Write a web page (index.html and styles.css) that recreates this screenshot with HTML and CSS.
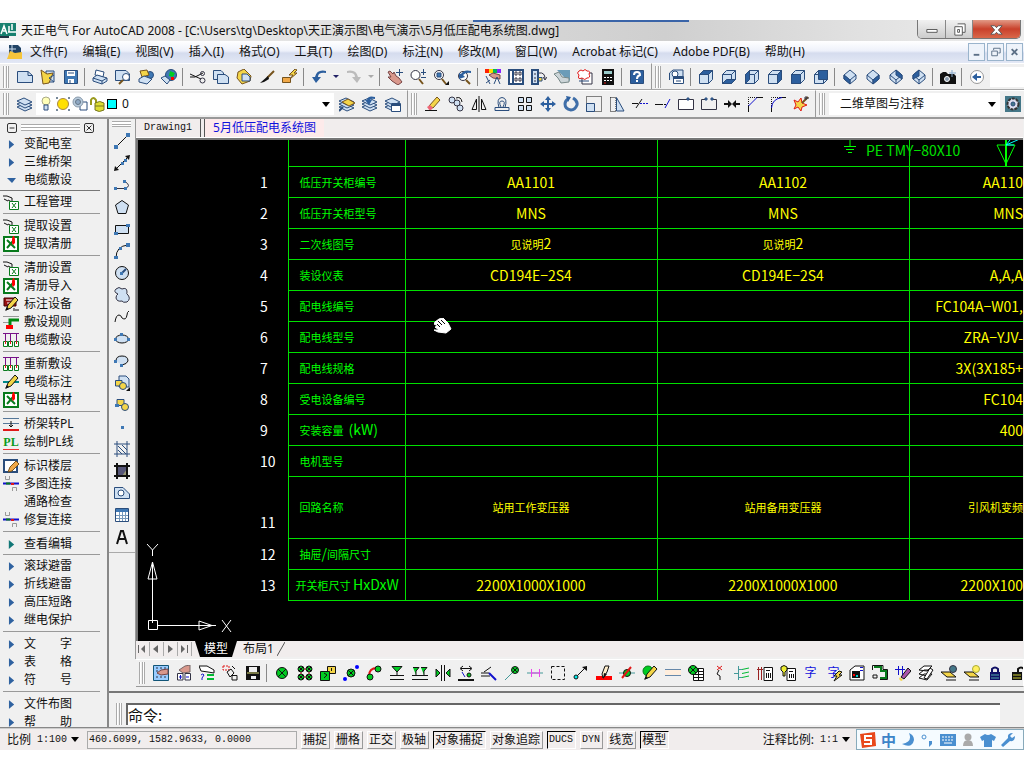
FILE: index.html
```html
<!DOCTYPE html>
<html lang="zh-CN">
<head>
<meta charset="utf-8">
<title>天正电气 For AutoCAD 2008</title>
<link rel="stylesheet" href="styles.css">
</head>
<body>
<svg class="defs" aria-hidden="true">
<symbol id="cube" viewBox="0 0 16 16"><path class="lb" d="M1.500 5.500L5.500 1.500H14.500V10.500L10.500 14.500H1.500Z"/><path d="M1.500 5.500H10.500V14.500M10.500 5.500L14.500 1.500"/></symbol>
<symbol id="dia" viewBox="0 0 16 16"><path class="lb" d="M8 1L14 6V10L8 15L2 10V6Z"/><path d="M2 6L8 11L14 6M8 11V15"/></symbol>
<symbol id="layers" viewBox="0 0 16 16"><path class="lb" d="M0 11L7 8L15 12L8 15Z"/><path class="lb" d="M0 8L7 5L15 9L8 12Z"/><path class="lb" d="M0 5L7 2L15 6L8 9Z"/></symbol>
<symbol id="hand" viewBox="0 0 16 16"><path class="sk w1" d="M0 2H4L9 4V8L5 6M1 5L5 7"/><path class="sgn wh" d="M6.500 7.500H15.500V15.500H6.500Z"/><path class="sgn" d="M9 9L13 14M13 9L9 14"/></symbol>
<symbol id="xls" viewBox="0 0 16 16"><path class="sgn2 wh" d="M1 1H15V15H1Z"/><path class="sgn2" d="M4 4L12 12M10 5L4 12"/><path class="rd n" d="M9 7V3L10 0H11L12 3V7L10 9Z"/></symbol>
<symbol id="racks" viewBox="0 0 16 16"><path class="sp" d="M0 1.500H16M2.500 1V9M7.500 1V9M13.500 1V9"/><path class="sgn wh" d="M.5 9.500H4.500V14.500H.5ZM5.500 9.500H9.500V14.500H5.500ZM11.500 9.500H15.500V14.500H11.500Z"/><path class="sr" d="M2.500 9V12M7.500 9V12M13.500 9V12"/></symbol>
<symbol id="join" viewBox="0 0 16 16"><path class="sgy" d="M2.500 0V3.500H6.500V0M9.500 15V11.500H13.500V15"/><path class="sb w2" d="M0 7.500H16"/><path class="sgn w2" d="M3 7.500H7"/><path class="sr w2" d="M8 8H11"/></symbol>
<symbol id="lamp" viewBox="0 0 16 16"><circle class="gn sk" cx="8" cy="8" r="5.500"/><path class="sk" d="M4 4L12 12M12 4L4 12"/></symbol>
<symbol id="pencil" viewBox="0 0 16 16"><path class="yl sk" d="M3 14L5 9L12 1L15 4L8 12Z"/><path class="bk n" d="M2 15L4 11L6 13Z"/></symbol>
<symbol id="tri" viewBox="0 0 6 10"><path class="tr" d="M0 0L6 5L0 10Z"/></symbol>
</svg>

<header class="titlebar">
  <svg class="appicon" viewBox="0 0 16 16"><path fill="#17806f" d="M0 0H16V13H0Z"/><path stroke="#fff" fill="none" stroke-width="1.500" d="M1 11L4 3L7 11M3 8H6M9 3V9M12 1V7M8 9H16"/><path fill="#234" d="M0 13H9V15H0Z"/></svg>
  <h1>天正电气 For AutoCAD 2008 - [C:\Users\tg\Desktop\天正演示图\电气演示\5月低压配电系统图.dwg]</h1>
  <span class="accent"></span>
  <div class="winbtns">
    <button class="wmin" aria-label="最小化"><svg viewBox="0 0 16 16"><path d="M3 8H14V11H3Z"/></svg></button><button class="wmax" aria-label="还原"><svg viewBox="0 0 16 16"><path d="M6 2H14V11H11M3 5H11V14H3ZM6 8H8V11H6Z"/></svg></button><button class="wclose" aria-label="关闭"><svg viewBox="0 0 16 16"><path d="M2 4H6L8 6L10 4H14L10 8.500L14 13H10L8 11L6 13H2L6 8.500Z"/></svg></button>
  </div>
</header>

<nav class="menubar">
  <svg class="docicon" viewBox="0 0 16 16"><path fill="#246" d="M2 1H11L14 4V12H2Z"/><path stroke="#cde" d="M5 1V8M2 5H9"/><path fill="#f6c53c" d="M0 15L3 7L8 9L15 8V15Z"/></svg>
  <button>文件(F)</button><button>编辑(E)</button><button>视图(V)</button><button>插入(I)</button><button>格式(O)</button><button>工具(T)</button><button>绘图(D)</button><button>标注(N)</button><button>修改(M)</button><button>窗口(W)</button><button>Acrobat 标记(C)</button><button>Adobe PDF(B)</button><button>帮助(H)</button>
  <div class="mdi">
    <button aria-label="最小化文档"><svg viewBox="0 0 16 16"><path d="M5 11H11" stroke-width="2"/></svg></button><button aria-label="还原文档"><svg viewBox="0 0 16 16"><path d="M6 6V4H13V9H11M4 7H10V12H4Z"/></svg></button><button aria-label="关闭文档"><svg viewBox="0 0 16 16"><path d="M5 5L11 11M11 5L5 11" stroke-width="2"/></svg></button>
  </div>
</nav>

<div class="bars">
<div class="bar">
  <div class="group">
    <span class="grip"></span>
    <button class="t" aria-label="新建"><svg viewBox="0 0 16 16"><path class="lb" d="M.5 2.500H11L15.500 6.500V13.500H.5Z"/><path d="M11 2.500V6.500H15.500"/></svg></button>
    <button class="t" aria-label="打开"><svg viewBox="0 0 16 16"><path class="lb" d="M6 2H14V13H6Z"/><path class="yl sbr" d="M1 1L7 5L13 4L9 14L3 15Z"/><path d="M14 6L9 9L14 13"/></svg></button>
    <button class="t" aria-label="保存"><svg viewBox="0 0 16 16"><path class="mb" d="M1.500 1.500H14.500V14.500H1.500Z"/><path class="wh n" d="M4 2H12V7H4ZM5 10H11V14H5Z"/><path d="M5 4H11M7 11V14"/></svg></button>
    <i class="sep"></i>
    <button class="t" aria-label="打印"><svg viewBox="0 0 16 16"><path class="wh" d="M4 1L12 3L11 8L3 6Z"/><path class="lb" d="M1 9L5 6L15 9V12L10 15L1 12Z"/><path d="M1 9L10 12L15 9M10 12V15"/></svg></button>
    <button class="t" aria-label="预览"><svg viewBox="0 0 16 16"><path class="lb" d="M.5 1.500H11L14.500 5V11.500H.5Z"/><circle class="wh" cx="11" cy="8" r="3.500"/><path class="sbr w2" d="M8 11L4 15"/></svg></button>
    <button class="t" aria-label="发布"><svg viewBox="0 0 16 16"><circle class="mb" cx="12" cy="6" r="3.500"/><path class="yl sbr" d="M2 2L9 1L11 6L4 8Z"/><path class="lb" d="M1 10L6 7L14 10L9 15L1 13Z"/></svg></button>
    <button class="t" aria-label="DWF"><svg viewBox="0 0 16 16"><circle class="mb" cx="10" cy="6" r="5.500"/><path class="gn n" d="M9 2L14 4L12 8L8 7Z"/><path class="lb" d="M0 9L4 7L9 11L6 15Z"/><path class="rd n" d="M10 8H13V11H10Z"/></svg></button>
    <i class="sep"></i>
    <button class="t" aria-label="剪切"><svg viewBox="0 0 16 16"><path class="sk" d="M0 5L11 10M0 8H5L13 4"/><circle class="sd" cx="12.500" cy="4.500" r="2"/><circle class="sd" cx="12.500" cy="11.500" r="2.500"/></svg></button>
    <button class="t" aria-label="复制"><svg viewBox="0 0 16 16"><path class="lb" d="M.5 1.500H8L10.500 4V10.500H.5Z"/><path class="lb" d="M4.500 5.500H12L15.500 8V14.500H4.500Z"/></svg></button>
    <button class="t" aria-label="粘贴"><svg viewBox="0 0 16 16"><path class="yl sbr" d="M2 3L8 0L15 7L14 12L6 15L1 9Z"/><path class="lb" d="M6 5H11L14 8V12H6Z"/></svg></button>
    <button class="t" aria-label="匹配特性"><svg viewBox="0 0 16 16"><path class="sbr w2" d="M15 2L8 9"/><path class="bk n" d="M9 7L10 10L5 13L1 14Z"/></svg></button>
    <button class="t" aria-label="块编辑"><svg viewBox="0 0 16 16"><path class="yl sbr" d="M13 0L7 6H11L8 10L15 4H12L15 1Z"/><path class="or sbr" d="M.5 8.500H8.500V13.500H.5Z"/></svg></button>
    <i class="sep"></i>
    <button class="t" aria-label="放弃"><svg viewBox="0 0 16 16"><path class="db n" d="M15 2Q6 0 4 8H1L5 14L10 8H7Q7 3 15 4Z"/></svg></button>
    <button class="drop" aria-label="放弃列表"><svg viewBox="0 0 6 4"><path d="M0 0H6L3 3Z"/></svg></button>
    <button class="t" aria-label="重做"><svg viewBox="0 0 16 16"><path fill="#bbb" class="n" d="M1 2Q10 0 12 8H15L11 14L6 8H9Q9 3 1 4Z"/></svg></button>
    <button class="drop dim" aria-label="重做列表"><svg viewBox="0 0 6 4"><path d="M0 0H6L3 3Z"/></svg></button>
    <i class="sep"></i>
    <button class="t" aria-label="平移"><svg viewBox="0 0 16 16"><path fill="#d9988c" stroke="#744" d="M1 3L3 2L6 5L7 3L9 7L12 9L15 13L11 16L5 12L1 8L4 8Z"/><path d="M12.500 0V7M9 3.500H16"/></svg></button>
    <button class="t" aria-label="实时缩放"><svg viewBox="0 0 16 16"><circle class="wh sd" cx="5.500" cy="6" r="4.500"/><path class="sbr w2" d="M9 10L13 15"/><path d="M13.500 0V6M11 3.500H16M11 8.500H16"/></svg></button>
    <button class="t" aria-label="窗口缩放"><svg viewBox="0 0 16 16"><circle class="wh sd" cx="6" cy="6" r="4.500"/><path class="mb" d="M4 4H8V8H4Z"/><path class="sbr w2" d="M9 10L13 15"/><path class="bk n" d="M16 12V16H12Z"/></svg></button>
    <button class="t" aria-label="上一个缩放"><svg viewBox="0 0 16 16"><circle class="wh sd" cx="7" cy="7" r="4.500"/><path class="sbr w2" d="M10 11L14 15"/><path class="db n" d="M15 2Q8 0 5 5L3 4V10L9 8L7 6Q10 3 15 4Z"/></svg></button>
    <i class="sep"></i>
    <button class="t" aria-label="特性"><svg viewBox="0 0 16 16"><path fill="#f20" class="n" d="M0 0H5V4H0Z"/><path fill="#fd0" class="n" d="M4 0H8V4H4Z"/><path fill="#0b5" class="n" d="M8 0H12V4H8Z"/><path fill="#82f" class="n" d="M12 0H16V4H12Z"/><path fill="#d9988c" stroke="#744" d="M4 6L8 4L15 6V10L8 9Z"/><path d="M1 7L5 15M1 14L5 11M9 15L12 8L15 15"/></svg></button>
    <button class="t" aria-label="设计中心"><svg viewBox="0 0 16 16"><path class="wh w2" d="M1 1H15V15H1Z"/><path class="w2" d="M5 1V15"/><path class="sd" d="M7 3V6H9V3ZM11 3V6H13V3ZM7 9V12H9V9ZM11 9V12H13V9Z"/></svg></button>
    <button class="t" aria-label="工具选项板"><svg viewBox="0 0 16 16"><path class="lb w2" d="M1 1H7V15H1Z"/><path class="sd" d="M3 5H5M3 9H5M3 12H5M8 4Q14 3 14 10M12 8L14 11L16 8"/><path class="yl" d="M7.500 8.500H11V12H7.500Z"/></svg></button>
    <button class="t" aria-label="图纸集"><svg viewBox="0 0 16 16"><path fill="#6b9cb8" class="n" d="M3 1H16V12L10 8Z"/><path fill="#ccd5d8" stroke="#788" d="M0 5L5 3L8 8L15 9V13L7 14L4 9Z"/></svg></button>
    <button class="t" aria-label="标记集"><svg viewBox="0 0 16 16"><path class="wh sd" d="M5 4H15V15H5Z"/><path class="sr wh" d="M2 2Q4 0 6 2Q8-1 10 2Q14 2 12 5Q14 9 10 9Q8 12 5 9Q0 11 2 6Q-1 4 2 2Z"/><path d="M2 12H12"/></svg></button>
    <button class="t" aria-label="计算器"><svg viewBox="0 0 16 16"><path class="bk n" d="M2 0H14V16H2Z"/><path fill="#9cc" class="n" d="M4 2H12V5H4Z"/><path stroke="#fff" stroke-dasharray="2 1" d="M4 8.500H12M4 11.500H12"/><path class="sr" d="M4 14H6"/></svg></button>
    <i class="sep"></i>
    <button class="t" aria-label="帮助"><svg viewBox="0 0 16 16"><path class="db" d="M1.500 1.500H14.500V14.500H1.500Z"/><path stroke="#fff" stroke-width="2" d="M5 6Q5 3 8 3Q11 3 11 6Q8 7 8 10M8 11V13"/></svg></button>
  </div>
  <div class="group last">
    <span class="grip"></span>
    <button class="t" aria-label="命名视图"><svg viewBox="0 0 16 16"><path class="lb" d="M.5 11V4L4 1H14V8"/><circle class="wh" cx="6" cy="5" r="3"/><path class="wh" d="M4.500 7.500H14.500V14.500H4.500Z"/><path class="w2" d="M5 9H14"/><path d="M7 12H12"/></svg></button>
    <i class="sep"></i>
    <button class="t" aria-label="俯视"><svg viewBox="0 0 16 16"><use href="#cube"/><path class="db" d="M1.500 5.500L5.500 1.500H14.500L10.500 5.500Z"/></svg></button>
    <button class="t" aria-label="仰视"><svg viewBox="0 0 16 16"><use href="#cube"/><path class="db" d="M1.500 14.500L5.500 10.500H14.500L10.500 14.500Z"/></svg></button>
    <button class="t" aria-label="左视"><svg viewBox="0 0 16 16"><use href="#cube"/><path class="db" d="M1.500 5.500L5.500 1.500V10.500L1.500 14.500Z"/></svg></button>
    <button class="t" aria-label="右视"><svg viewBox="0 0 16 16"><use href="#cube"/><path class="db" d="M10.500 5.500L14.500 1.500V10.500L10.500 14.500Z"/></svg></button>
    <button class="t" aria-label="主视"><svg viewBox="0 0 16 16"><use href="#cube"/><path class="db" d="M1.500 5.500H10.500V14.500H1.500Z"/></svg></button>
    <button class="t" aria-label="后视"><svg viewBox="0 0 16 16"><use href="#cube"/><path class="db" d="M5.500 1.500H14.500V10.500H5.500Z"/></svg></button>
    <i class="sep"></i>
    <button class="t" aria-label="西南"><svg viewBox="0 0 16 16"><use href="#dia"/><path class="db" d="M2 6L8 11V15L2 10Z"/></svg></button>
    <button class="t" aria-label="东南"><svg viewBox="0 0 16 16"><use href="#dia"/><path class="db" d="M14 6L8 11V15L14 10Z"/></svg></button>
    <button class="t" aria-label="东北"><svg viewBox="0 0 16 16"><use href="#dia"/><path class="db" d="M8 1L14 6V10L8 6Z"/></svg></button>
    <button class="t" aria-label="西北"><svg viewBox="0 0 16 16"><use href="#dia"/><path class="db" d="M8 1L2 6V10L8 7Z"/></svg></button>
    <i class="sep"></i>
    <button class="t" aria-label="相机"><svg viewBox="0 0 16 16"><path class="bk n" d="M0 5L3 3H6L8 5H14L16 7V15H0Z"/><circle fill="#89a" stroke="#fff" cx="7" cy="10" r="2.500"/><path stroke="#8ac" d="M12 1V8M9 4H16"/></svg></button>
    <i class="sep"></i>
    <button class="t" aria-label="返回"><svg viewBox="0 0 16 16"><circle class="wh sgy" cx="8" cy="8" r="6.500"/><path class="db n" d="M3 8L8 4V7H12V9H8V12Z"/></svg></button>
    <input class="search" aria-label="搜索">
  </div>
</div>

<div class="bar">
  <div class="group">
    <span class="grip"></span>
    <button class="t" aria-label="图层特性"><svg viewBox="0 0 16 16"><use href="#layers"/></svg></button>
    <div class="combo layer">
      <svg viewBox="0 0 16 16"><circle fill="#ffffb8" stroke="#aa8" cx="8" cy="5" r="4"/><path class="lb" d="M6 9H10V14H6Z"/></svg>
      <svg viewBox="0 0 16 16"><circle fill="#ffe000" stroke="#a84" cx="8" cy="8" r="5.500"/><path fill="#789" class="n" d="M1 1H3V3H1ZM13 1H15V3H13ZM1 13H3V15H1ZM13 13H15V15H13Z"/></svg>
      <svg viewBox="0 0 16 16"><path class="wh" d="M8 6H15V14H8Z"/><circle fill="#b8cbdc" stroke="#89a" cx="6" cy="6" r="5"/><circle fill="#8fa9c4" stroke="#678" cx="6" cy="6" r="2.500"/></svg>
      <svg viewBox="0 0 16 16"><path class="w2 sol" d="M2 9V4Q4 0 7 4V8"/><path fill="#dd3" stroke="#772" d="M6 7Q11 4 15 7V14Q10 17 6 14Z"/><path stroke="#772" d="M6 10H15"/></svg>
      <span class="swatch"></span>
      <select class="sel" aria-label="图层"><option>0</option></select>
      <svg class="arr" viewBox="0 0 8 5"><path d="M0 0H8L4 5Z"/></svg>
    </div>
    <button class="t" aria-label="置为当前"><svg viewBox="0 0 16 16"><use href="#layers"/><path class="yl sbr" d="M3 6L9 3L16 7L10 10Z"/><path class="w2" d="M0 15L4 11"/></svg></button>
    <button class="t" aria-label="上一图层"><svg viewBox="0 0 16 16"><use href="#layers"/><path class="db n" d="M13 1Q6-1 5 4H3L7 9L10 4H8Q9 2 13 3Z"/></svg></button>
    <button class="t" aria-label="图层状态"><svg viewBox="0 0 16 16"><use href="#layers"/><path class="wh" d="M6.500 7.500H15.500V15.500H6.500Z"/><path class="w2" d="M7 9H15"/></svg></button>
  </div>
  <div class="group">
    <span class="grip"></span>
    <button class="t" aria-label="删除"><svg viewBox="0 0 16 16"><path class="yl sbr" d="M4 10L12 1L15 4L8 12Z"/><path fill="#e67" class="n" d="M2 11L5 9L8 12L5 15Z"/><path class="sk" d="M0 14.500H12"/></svg></button>
    <button class="t" aria-label="复制对象"><svg viewBox="0 0 16 16"><circle class="lb sd" cx="4" cy="4" r="3"/><circle class="lb sd" cx="9" cy="7" r="3"/><circle class="lb sd" cx="12" cy="12" r="3"/><path class="sk" d="M8 2Q13 0 14 6"/></svg></button>
    <button class="t" aria-label="镜像"><svg viewBox="0 0 16 16"><path class="sk" d="M5.500 3V13.500H1ZM10.500 3V13.500H15ZM8 0V16"/></svg></button>
    <button class="t" aria-label="偏移"><svg viewBox="0 0 16 16"><path d="M1 14.500H15V11.500H11Q14 2 8 1.500Q2 2 5 11.500H1Z"/><path d="M5 11.500H11M7 11Q4 5 8 5Q12 5 9 11"/></svg></button>
    <button class="t" aria-label="阵列"><svg viewBox="0 0 16 16"><path class="lb sk" d="M1.500 1.500H6.500V6.500H1.500ZM9.500 1.500H14.500V6.500H9.500ZM1.500 9.500H6.500V14.500H1.500ZM9.500 9.500H14.500V14.500H9.500Z"/></svg></button>
    <button class="t" aria-label="移动"><svg viewBox="0 0 16 16"><path class="db n" d="M8 0L11 4H9V7H12V5L16 8L12 11V9H9V12H11L8 16L5 12H7V9H4V11L0 8L4 5V7H7V4H5Z"/></svg></button>
    <button class="t" aria-label="旋转"><svg viewBox="0 0 16 16"><path stroke="#3f6ea8" stroke-width="3" d="M10 2Q15 5 14 9Q12 14 8 14Q2 13 2 8Q2 5 5 3"/><path class="db n" d="M3 0L8 1L5 6Z"/></svg></button>
    <button class="t" aria-label="缩放"><svg viewBox="0 0 16 16"><path stroke-dasharray="1 1" class="sk" d="M.5 15.500V.5H15.500V15.500Z"/><path class="lb" d="M.5 7.500H8.500V15.500H.5Z"/></svg></button>
    <button class="t" aria-label="拉伸"><svg viewBox="0 0 16 16"><path stroke-dasharray="1 1" class="sk" d="M1.500 1.500V15.500H7V1.500Z"/><path class="lb" d="M7.500 1.500L15 15H7.500Z"/></svg></button>
    <button class="t" aria-label="修剪"><svg viewBox="0 0 16 16"><path class="sk" d="M0 7.500H6M4 12L10 3"/><path class="sb" stroke-dasharray="2 1" d="M8 7.500H16"/></svg></button>
    <button class="t" aria-label="延伸"><svg viewBox="0 0 16 16"><path class="sk" d="M0 8.500H6"/><path stroke-dasharray="2 1" class="sk" d="M6 8.500H11"/><path class="sb" d="M10 12L15 3"/></svg></button>
    <button class="t" aria-label="打断于点"><svg viewBox="0 0 16 16"><path class="wh sd" d="M.5 3.500H15.500V13.500H.5Z"/><path class="mb" d="M9 2H11V4H9Z"/></svg></button>
    <button class="t" aria-label="打断"><svg viewBox="0 0 16 16"><path class="sd" d="M5 3.500H.5V13.500H15.500V3.500H11"/><path class="mb" d="M4 2H6V4H4ZM10 2H12V4H10Z"/></svg></button>
    <button class="t" aria-label="合并"><svg viewBox="0 0 16 16"><path class="sk w2" d="M0 8H5M11 8H16"/><path class="bk n" d="M4 4L8 8L4 12ZM12 4L8 8L12 12Z"/></svg></button>
    <button class="t" aria-label="倒角"><svg viewBox="0 0 16 16"><path class="sk" stroke-dasharray="1 1" d="M1.500 10V1.500H10"/><path class="sk" d="M1.500 10V16M10 1.500H16"/><path class="sb" d="M1.500 10L10 1.500"/></svg></button>
    <button class="t" aria-label="圆角"><svg viewBox="0 0 16 16"><path class="sk" stroke-dasharray="1 1" d="M1.500 10V1.500H10"/><path class="sk" d="M1.500 10V16M10 1.500H16"/><path class="sb" d="M1.500 12Q2 3 12 1.500"/></svg></button>
    <button class="t" aria-label="分解"><svg viewBox="0 0 16 16"><path class="yl sr" d="M1 4L5 6L8 2L9 7L14 9L9 11L8 15L5 11L1 13L3 9Z"/><path class="sbr w2" d="M9 7L15 1"/><path class="sd" d="M13 0V4M11 2H16"/></svg></button>
  </div>
  <div class="group last">
    <span class="grip"></span>
    <div class="combo space"><select class="sel" aria-label="工作空间"><option>二维草图与注释</option></select><svg class="arr" viewBox="0 0 8 5"><path d="M0 0H8L4 5Z"/></svg></div>
    <button class="t" aria-label="工作空间设置"><svg viewBox="0 0 16 16"><path fill="#478" class="n" d="M0 0H16V16H0Z"/><circle fill="#dde" stroke="#333" stroke-dasharray="3 1" stroke-width="2" cx="8" cy="8" r="5.500"/><circle fill="#478" cx="8" cy="8" r="2"/></svg></button>
  </div>
</div>
</div>

<main class="work">
  <aside class="panel">
    <div class="phead"><button aria-label="折叠"><svg viewBox="0 0 10 10"><path d="M2 5H8"/></svg></button><span></span><button aria-label="关闭面板"><svg viewBox="0 0 10 10"><path d="M2 2L8 8M8 2L2 8"/></svg></button></div>
    <button class="p"><svg class="a" viewBox="0 0 6 10"><use href="#tri"/></svg>变配电室</button>
    <button class="p"><svg class="a" viewBox="0 0 6 10"><use href="#tri"/></svg>三维桥架</button>
    <button class="p"><svg class="a down" viewBox="0 0 9 5"><path class="tr" d="M0 0H9L5 5Z"/></svg>电缆敷设</button>
    <hr class="tight wide">
    <button class="p"><svg viewBox="0 0 16 16"><use href="#hand"/></svg>工程管理</button>
    <hr>
    <button class="p"><svg viewBox="0 0 16 16"><use href="#hand"/></svg>提取设置</button>
    <button class="p"><svg viewBox="0 0 16 16"><use href="#xls"/></svg>提取清册</button>
    <hr>
    <button class="p"><svg viewBox="0 0 16 16"><use href="#hand"/></svg>清册设置</button>
    <button class="p"><svg viewBox="0 0 16 16"><use href="#xls"/></svg>清册导入</button>
    <button class="p"><svg viewBox="0 0 16 16"><path fill="#911" stroke="#400" d="M1 2H13V10H1Z"/><path stroke="#fff" d="M3 4H10M4 7H7"/><use href="#pencil"/><path class="sk" d="M11 12V15M13 13V15M15 13V15"/></svg>标注设备</button>
    <button class="p"><svg viewBox="0 0 16 16"><path class="sgy" d="M0 2.500H16M0 8.500H6"/><path stroke="#081" stroke-width="3" d="M16 6H7V12"/><path class="rd n" d="M3 11H10V15H3Z"/></svg>敷设规则</button>
    <button class="p"><svg viewBox="0 0 16 16"><use href="#racks"/></svg>电缆敷设</button>
    <hr>
    <button class="p"><svg viewBox="0 0 16 16"><use href="#racks"/></svg>重新敷设</button>
    <button class="p"><svg viewBox="0 0 16 16"><path stroke="#088" stroke-width="2" d="M0 8H16"/><use href="#pencil"/></svg>电缆标注</button>
    <button class="p"><svg viewBox="0 0 16 16"><use href="#xls"/></svg>导出器材</button>
    <hr>
    <button class="p"><svg viewBox="0 0 16 16"><path stroke="#579" d="M0 2.500H16M0 7.500H16"/><path class="sk" d="M8 5V11M6 9L8 11L10 9"/><path class="sr w2" d="M0 14H16"/></svg>桥架转PL</button>
    <button class="p"><span class="pl">PL</span>绘制PL线</button>
    <hr>
    <button class="p"><svg viewBox="0 0 16 16"><path class="wh w2" d="M1 2H14V14H1Z"/><path class="or sbr" d="M5 14L7 9L13 3L16 6L9 13Z"/></svg>标识楼层</button>
    <button class="p"><svg viewBox="0 0 16 16"><use href="#join"/></svg>多图连接</button>
    <button class="p"><svg viewBox="0 0 16 16"></svg>通路检查</button>
    <button class="p"><svg viewBox="0 0 16 16"><use href="#join"/></svg>修复连接</button>
    <hr>
    <button class="p"><svg class="a" viewBox="0 0 6 10"><path fill="#177" stroke="none" d="M0 0L6 5L0 10Z"/></svg>查看编辑</button>
    <hr class="tight">
    <button class="p"><svg class="a" viewBox="0 0 6 10"><use href="#tri"/></svg>滚球避雷</button>
    <button class="p"><svg class="a" viewBox="0 0 6 10"><use href="#tri"/></svg>折线避雷</button>
    <button class="p"><svg class="a" viewBox="0 0 6 10"><use href="#tri"/></svg>高压短路</button>
    <button class="p"><svg class="a" viewBox="0 0 6 10"><use href="#tri"/></svg>继电保护</button>
    <hr>
    <button class="p"><svg class="a" viewBox="0 0 6 10"><use href="#tri"/></svg>文　　字</button>
    <button class="p"><svg class="a" viewBox="0 0 6 10"><use href="#tri"/></svg>表　　格</button>
    <button class="p"><svg class="a" viewBox="0 0 6 10"><use href="#tri"/></svg>符　　号</button>
    <hr>
    <button class="p"><svg class="a" viewBox="0 0 6 10"><use href="#tri"/></svg>文件布图</button>
    <div class="cut"><button class="p"><svg class="a" viewBox="0 0 6 10"><use href="#tri"/></svg>帮　　助</button></div>
  </aside>

  <div class="right">
    <div class="upper">
      <div class="drawcol"><div class="drawbar">
        <span class="hgrip"></span>
        <button class="t" aria-label="直线"><svg viewBox="0 0 16 16"><path class="sk" d="M2 14L14 2"/><path class="mb n" d="M0 12H4V16H0ZM12 0H16V4H12Z"/></svg></button>
        <button class="t" aria-label="构造线"><svg viewBox="0 0 16 16"><path class="sk" d="M1 15L15 1"/><path class="bk n" d="M0 16L1 11L5 15ZM16 0L11 1L15 5Z"/><path class="mb n" d="M7 7H10V10H7ZM10 4H13V7H10Z"/></svg></button>
        <button class="t" aria-label="多段线"><svg viewBox="0 0 16 16"><path class="sd" d="M1 11.500H11Q18 9 11 4.500"/><path class="mb n" d="M0 10H3V13H0ZM10 10H13V13H10ZM9 3H12V6H9Z"/></svg></button>
        <button class="t" aria-label="正多边形"><svg viewBox="0 0 16 16"><path class="lb sk" d="M8 1.500L14.500 6L12 14.500H4L1.500 6Z"/></svg></button>
        <button class="t" aria-label="矩形"><svg viewBox="0 0 16 16"><path class="lb sk" d="M1.500 4.500H14.500V12.500H1.500Z"/><path class="mb n" d="M0 11H4V14H0ZM12 3H16V6H12Z"/></svg></button>
        <button class="t" aria-label="圆弧"><svg viewBox="0 0 16 16"><path class="sk" d="M2 15Q2 3 14 2"/><path class="mb n" d="M0 13H4V16H0ZM12 0H16V4H12ZM5 4H8V7H5Z"/></svg></button>
        <button class="t" aria-label="圆"><svg viewBox="0 0 16 16"><circle class="lb sk" cx="8" cy="8" r="6.500"/><path class="w2" d="M8 8L12 4"/><path class="mb n" d="M6 7H9V10H6Z"/></svg></button>
        <button class="t" aria-label="修订云线"><svg viewBox="0 0 16 16"><path class="lb sd" d="M4 7Q-1 5 2 2Q5-1 8 2Q13 0 13 5Q12 7 14 8Q17 12 13 15Q9 16 8 14Q3 15 2 11Q2 8 4 7Z"/></svg></button>
        <button class="t" aria-label="样条曲线"><svg viewBox="0 0 16 16"><path class="sk" d="M1 13Q2 6 5 6Q7 6 8 9Q12 12 13 6Q13 3 15 2"/></svg></button>
        <button class="t" aria-label="椭圆"><svg viewBox="0 0 16 16"><ellipse class="lb sk" cx="8" cy="8" rx="6.500" ry="4"/><path class="mb n" d="M6 2H9V5H6ZM0 7H3V10H0ZM13 7H16V10H13Z"/></svg></button>
        <button class="t" aria-label="椭圆弧"><svg viewBox="0 0 16 16"><path class="lb sk" d="M2 8Q2 3 8 3Q14 3 14 8Q13 11 8 12"/><path class="mb n" d="M0 7H3V10H0ZM6 11H9V14H6Z"/></svg></button>
        <button class="t" aria-label="插入块"><svg viewBox="0 0 16 16"><path class="lb" d="M5 1H12L15 4V12H5Z"/><path class="yl" d="M1.500 5.500H8V11H1.500Z"/><circle class="yl" cx="9" cy="11" r="3.500"/><path class="bk n" d="M16 12V16H12Z"/></svg></button>
        <button class="t" aria-label="创建块"><svg viewBox="0 0 16 16"><path class="yl" d="M3 2.500H10V8.500H3Z"/><circle class="yl" cx="11" cy="10" r="3.500"/><path class="mb n" d="M1 7H5V10H1Z"/></svg></button>
        <button class="t" aria-label="点"><svg viewBox="0 0 16 16"><path class="mb n" d="M7 7H10V10H7Z"/></svg></button>
        <button class="t" aria-label="图案填充"><svg viewBox="0 0 16 16"><path d="M4 5L12 13M4 9L8 13M8 4L13 9"/><path d="M3 0V16M13 0V16M0 3H16M0 13H16"/></svg></button>
        <button class="t" aria-label="渐变色"><svg viewBox="0 0 16 16"><path fill="#557" class="n" d="M3 3H13V13H3Z"/><path fill="#997" class="n" d="M8 13L13 6V13Z"/><path class="sk w2" d="M3 0V16M13 0V16M0 3H16M0 13H16"/></svg></button>
        <button class="t" aria-label="面域"><svg viewBox="0 0 16 16"><path class="lb" d="M.5 2.500H9L15.500 9V13.500H.5Z"/><circle class="wh" cx="7" cy="8" r="3"/></svg></button>
        <button class="t" aria-label="表格工具"><svg viewBox="0 0 16 16"><path class="wh" d="M1.500 1.500H14.500V14.500H1.500Z"/><path class="mb n" d="M2 2H14V5H2Z"/><path stroke="#79b" d="M5.500 5V14M8.500 5V14M11.500 5V14M2 8.500H14M2 11.500H14"/></svg></button>
        <button class="t" aria-label="多行文字"><svg viewBox="0 0 16 16"><path class="sk w2" d="M3 15L7 2H9L13 15M5 10H11"/></svg></button>
      </div></div>
      <div class="doc">
        <div class="tabs"><button class="mono">Drawing1</button><button class="on">5月低压配电系统图</button></div>
        <div class="canvas">
          <table>
            <colgroup><col class="cn"><col class="cl"><col class="cd"><col class="cd"><col></colgroup>
            <tr class="top"><th></th><th></th><td></td><td></td><td></td></tr>
            <tr><th>1</th><th>低压开关柜编号</th><td>AA1101</td><td>AA1102</td><td>AA110</td></tr>
            <tr><th>2</th><th>低压开关柜型号</th><td>MNS</td><td>MNS</td><td>MNS</td></tr>
            <tr><th>3</th><th>二次线图号</th><td class="z">见说明<b>2</b></td><td class="z">见说明<b>2</b></td><td></td></tr>
            <tr><th>4</th><th>装设仪表</th><td>CD194E−2S4</td><td>CD194E−2S4</td><td>A,A,A</td></tr>
            <tr><th>5</th><th>配电线编号</th><td></td><td></td><td>FC104A−W01,</td></tr>
            <tr><th>6</th><th>配电线型号</th><td></td><td></td><td>ZRA−YJV-</td></tr>
            <tr><th>7</th><th>配电线规格</th><td></td><td></td><td>3X(3X185+</td></tr>
            <tr><th>8</th><th>受电设备编号</th><td></td><td></td><td>FC104</td></tr>
            <tr><th>9</th><th>安装容量&nbsp; <b>(kW)</b></th><td></td><td></td><td>400</td></tr>
            <tr><th>10</th><th>电机型号</th><td></td><td></td><td></td></tr>
            <tr class="tall"><th>11</th><th>回路名称</th><td class="z">站用工作变压器</td><td class="z">站用备用变压器</td><td class="z">引风机变频</td></tr>
            <tr><th>12</th><th>抽屉<b>/</b>间隔尺寸</th><td></td><td></td><td></td></tr>
            <tr><th>13</th><th class="w">开关柜尺寸 <b>HxDxW</b></th><td>2200X1000X1000</td><td>2200X1000X1000</td><td>2200X100</td></tr>
          </table>
          <div class="pe"><svg viewBox="0 0 12 14"><path d="M6 0V6M0 6.500H12M2 9.500H10M4 12.500H8"/></svg>PE TMY−80X10</div>
          <svg class="tap" viewBox="0 0 26 28"><path d="M1 7H19L10 26Z"/><path stroke-width="2" d="M10 0V28"/><path stroke="#0ff" d="M10 7L26 0M14 2L10 7L18 7"/></svg>
          <svg class="ucs" viewBox="0 0 90 92"><path d="M6.500 82V22M12 84.500H70M2.500 79.500H11.500V88.500H2.500ZM2 38H11L6.500 21ZM53 80V89L66 84.500ZM1 3L6.500 9L12 3M6.500 9V15M76 79L85 91M85 79L76 91"/></svg>
          <svg class="cursor" viewBox="0 0 18 16"><path d="M1 4L5 1L9 0L14 5L17 11L12 15L4 14L0 12L5 12L1 9L4 8L0 6Z"/><path stroke="#000" fill="none" d="M4 3L8 7M7 2L11 6M3 6L6 9"/></svg>
        </div>
        <div class="modeltabs"><button class="nb" aria-label="首个"><svg viewBox="0 0 10 10"><path d="M1 1H2V9H1ZM8 1L4 5L8 9Z"/></svg></button><button class="nb" aria-label="上一个"><svg viewBox="0 0 10 10"><path d="M7 1L2 5L7 9Z"/></svg></button><button class="nb" aria-label="下一个"><svg viewBox="0 0 10 10"><path d="M3 1L8 5L3 9Z"/></svg></button><button class="nb" aria-label="末个"><svg viewBox="0 0 10 10"><path d="M2 1L6 5L2 9ZM8 1H9V9H8Z"/></svg></button><button class="mt on">模型</button><button class="mt">布局1</button><svg class="slash" viewBox="0 0 8 14"><path d="M0 14L8 0"/></svg></div>
      </div>
    </div>

    <div class="elec">
      <span class="grip"></span>
      <button class="t" aria-label="设置"><svg viewBox="0 0 16 16"><path fill="#9cf" stroke="#157" d="M.5 .5H15.500V15.500H.5Z"/><path class="sd" stroke-dasharray="2 2" d="M3 3H13M3 6H13M3 12H13"/><path fill="#d9988c" stroke="#744" d="M4 8L8 5L15 4V9L8 10Z"/></svg></button>
      <button class="t" aria-label="导线"><svg viewBox="0 0 16 16"><path fill="#d9988c" stroke="#766" d="M3 5L9 1L14 0V7L7 8Z"/><path class="wh sd" d="M1.500 8.500H7V15H1.500ZM9 8.500H14.500V15H9Z"/><path class="sb" d="M3 12H6M4.500 10V14M10 12H13"/></svg></button>
      <button class="t" aria-label="布置"><svg viewBox="0 0 16 16"><path class="sk wh" d="M0 1L8 1L15 5V8L9 7L2 6Z"/><path class="sb" d="M2 10Q4 8 5 10L3 13V15"/><path class="sg w2" d="M8 10H15M8 14H15"/></svg></button>
      <button class="t" aria-label="选择"><svg viewBox="0 0 16 16"><path class="sr" stroke-dasharray="2 1" d="M1 1H7V5H1Z"/><path class="sk" d="M5 7L9 4L12 8L8 12ZM10 1L13 4M10 10.500H15V15H10Z"/></svg></button>
      <button class="t" aria-label="存盘"><svg viewBox="0 0 16 16"><path class="bk n" d="M1 1H15V15H1Z"/><path fill="#774" class="n" d="M2 7H14V9H2Z"/><path fill="#eee" class="n" d="M4 2H12V7H4ZM6 11H11V14H6Z"/></svg></button>
      <i class="sep"></i>
      <button class="t" aria-label="灯具"><svg viewBox="0 0 16 16"><use href="#lamp"/></svg></button>
      <button class="t" aria-label="多灯"><svg viewBox="0 0 16 16"><path class="sr" d="M4 4H12V12H4Z"/><g class="gn sk"><circle cx="4" cy="4" r="3"/><circle cx="12" cy="4" r="3"/><circle cx="4" cy="12" r="3"/><circle cx="12" cy="12" r="3"/></g><path class="sk" d="M2 2L6 6M6 2L2 6M10 2L14 6M14 2L10 6M2 10L6 14M6 10L2 14M10 10L14 14M14 10L10 14"/></svg></button>
      <button class="t" aria-label="设备替换"><svg viewBox="0 0 16 16"><path class="yl sk" d="M7.500 1.500H15.500V8.500H7.500Z"/><path class="gn sk" d="M.5 6.500H9.500V15.500H.5Z"/><path class="sk" d="M11.500 3V6M4 8L7 10L4 13"/></svg></button>
      <button class="t" aria-label="两点"><svg viewBox="0 0 16 16"><circle class="gn sk" cx="8" cy="8" r="4"/><path class="sk" d="M5 5L11 11M11 5L5 11"/><circle fill="#00f" class="n" cx="2" cy="14" r="2"/><circle fill="#00f" class="n" cx="14" cy="2" r="2"/></svg></button>
      <button class="t" aria-label="弧线"><svg viewBox="0 0 16 16"><path class="sr w2" d="M3 11Q3 3 11 3"/><circle class="gn sk" cx="4" cy="12" r="3"/><circle class="gn sk" cx="12" cy="4" r="3"/></svg></button>
      <button class="t" aria-label="插座"><svg viewBox="0 0 16 16"><path class="gn sk" d="M3 1.500H13L8 7ZM8 6V10"/><path class="sk" d="M1 10.500H15M1 14.500H15"/></svg></button>
      <button class="t" aria-label="双插座"><svg viewBox="0 0 16 16"><path class="gn sk" d="M1 2.500H7L4 6V10M9 2.500H15L12 6V10"/><path class="sk" d="M0 10.500H16M0 14.500H16"/></svg></button>
      <button class="t" aria-label="穿墙"><svg viewBox="0 0 16 16"><path class="gn sk" d="M1 4L5 8L1 12ZM15 4L11 8L15 12Z"/><path class="sk" d="M6.500 0V16M9.500 0V16"/></svg></button>
      <button class="t" aria-label="平移设备"><svg viewBox="0 0 16 16"><path class="sk" d="M3 3.500H13M5 1L2 3.500L5 6M11 1L14 3.500L11 6"/><path class="sk w2" d="M0 15H16"/><path class="sb" d="M4 7L7 12"/><circle class="gn sk" cx="11" cy="10" r="2"/></svg></button>
      <button class="t" aria-label="开关"><svg viewBox="0 0 16 16"><path class="sk" d="M0 8H8M0 11H9M3 7L10 2"/><path class="sb w2" d="M8 8L15 15"/></svg></button>
      <button class="t" aria-label="引线"><svg viewBox="0 0 16 16"><path stroke="#499" d="M1 15L9 7"/><circle class="gn sk" cx="11" cy="5" r="3.500"/><path class="sk" d="M9 3L13 7M13 3L9 7"/></svg></button>
      <button class="t" aria-label="断线"><svg viewBox="0 0 16 16"><path stroke="#499" d="M0 8H16"/><path stroke="#e4e" d="M4.500 4V12M12.500 4V12M4 8H12"/></svg></button>
      <button class="t" aria-label="框选"><svg viewBox="0 0 16 16"><path class="sk" stroke-dasharray="3 2" d="M1.500 1.500H14.500V14.500H1.500Z"/></svg></button>
      <button class="t" aria-label="连线"><svg viewBox="0 0 16 16"><path class="sk" d="M4 11L12 3"/><path class="bk n" d="M14 1V6L9 2Z"/><circle fill="#0ee" class="sk" cx="3" cy="12" r="2"/></svg></button>
      <button class="t" aria-label="擦除"><svg viewBox="0 0 16 16"><path class="rd n" d="M0 11H16V15H0Z"/><path fill="#fec" class="sk" d="M6 9L9 1H13L11 7L7 13Z"/><path class="bk n" d="M8 8L11 9L7 14Z"/></svg></button>
      <button class="t" aria-label="禁止"><svg viewBox="0 0 16 16"><path stroke="#499" d="M0 8H16"/><circle class="gn sk" cx="8" cy="8" r="3.500"/><path class="sr w2" d="M3 13L12 2"/></svg></button>
      <button class="t" aria-label="编辑设备"><svg viewBox="0 0 16 16"><circle class="gn sgn" cx="6" cy="6" r="5"/><use href="#pencil"/></svg></button>
      <button class="t" aria-label="双线"><svg viewBox="0 0 16 16"><path fill="#fed" class="n" d="M0 5H16V10H0Z"/><path stroke="#68a" d="M0 4.500H16M0 10.500H16"/></svg></button>
      <button class="t" aria-label="设备表"><svg viewBox="0 0 16 16"><path class="wh sk" d="M5.500 3.500H15.500V15.500H5.500ZM5 6.500H15M5 9.500H15M5 12.500H15M10.500 3V15"/><circle class="gn sk" cx="5" cy="5" r="4.500"/><path class="sk" d="M2 2L8 8M8 2L2 8"/></svg></button>
      <button class="t" aria-label="标注点"><svg viewBox="0 0 16 16"><path class="sr" d="M6 1L11 5M11 1L6 5"/><path class="sk" d="M8 5L6 9L9 11V15"/></svg></button>
      <button class="t" aria-label="系统图"><svg viewBox="0 0 16 16"><path stroke="#499" d="M4.500 1V15M0 8.500H5M5 4.500H8M5 12.500H8"/><path class="sg" d="M8 4.500L15 3M8 8.500L15 7M8 12.500L15 11"/></svg></button>
      <button class="t" aria-label="回路"><svg viewBox="0 0 16 16"><path stroke="#922" d="M0 4.500H6M1.500 2V15M4.500 2V15"/><path class="wh sk" d="M7 2.500H15.500V15.500H7ZM9 5.500H13M9.500 8V13M11.500 8V13M13.500 8V13"/></svg></button>
      <button class="t" aria-label="照度"><svg viewBox="0 0 16 16"><path class="wh sk" d="M7 3.500H15.500V15.500H7ZM9 6.500H13M9.500 9V13M11.500 9V13M13.500 9V13"/><path fill="#ee3" class="sk" d="M1 2Q4-1 7 2V5L5 7V11H3V7L1 5Z"/></svg></button>
      <button class="t cj" aria-label="文字">字</button>
      <button class="t cj" aria-label="文字编辑">字<svg class="bolt" viewBox="0 0 16 16"><path class="yl sk" d="M12 5L7 10H10L7 15L15 9H12L15 6Z"/></svg></button>
      <button class="t" aria-label="图块"><svg viewBox="0 0 16 16"><path class="wh sk" d="M1 5L6 1H15V15H1Z"/><path class="bk n" d="M3 6H11V13H3Z"/><path class="rd n" d="M4 9H6V11H4Z"/><path class="sb" d="M11 2.500H14M11 5.500H14"/><path fill="#0cc" class="n" d="M7 10H9V12H7Z"/></svg></button>
      <button class="t" aria-label="房间"><svg viewBox="0 0 16 16"><path class="sgn w2" d="M2 2H9V6H14V13H8"/><path class="sk" d="M.5 5V.5H11V4.500H15.500V14.500H8M1 10V13H5V10H1"/></svg></button>
      <button class="t" aria-label="标注擦"><svg viewBox="0 0 16 16"><path class="sb" d="M0 4.500H10M3.500 1V10M7.500 1V12"/><path fill="#a5a" class="sk" d="M6 12L13 3L16 6L9 14Z"/><path class="yl n" d="M5 12L8 15L6 16L4 14Z"/></svg></button>
      <button class="t" aria-label="图层刷"><svg viewBox="0 0 16 16"><path class="wh sk" d="M1 13L6 9H14L9 15ZM1 9L6 5H14L9 11ZM1 5L6 1H14L9 6Z"/><path class="wh sk" d="M6 13L12 3L15 5L9 14Z"/></svg></button>
      <button class="t" aria-label="关图层"><svg viewBox="0 0 16 16"><path class="yl sk" d="M0 7H9L15 12H6Z"/><path class="sk" d="M5 15H15"/><circle fill="#478" class="sd" cx="12" cy="4" r="3.500"/></svg></button>
      <button class="t" aria-label="开图层"><svg viewBox="0 0 16 16"><path class="yl sk" d="M0 7H9L15 12H6Z"/><path class="sk" d="M5 15H15"/><circle fill="#fff060" stroke="#aa3" cx="12" cy="4" r="3.500"/></svg></button>
      <button class="t" aria-label="锁定"><svg viewBox="0 0 16 16"><path stroke="#116" stroke-width="2" d="M5 8V4Q8 1 11 4V8"/><path fill="#116" stroke="none" d="M3 7H13V15H3Z"/><path stroke="#5aa" d="M4 10H12M4 13H12"/></svg></button>
      <button class="t" aria-label="解锁"><svg viewBox="0 0 16 16"><path class="sk w2" d="M8 7V4Q11 1 14 4V7"/><path class="bk n" d="M2 7H12V15H2Z"/><path stroke="#cc3" d="M3 10H11M3 13H11"/></svg></button>
    </div>

    <div class="cmd"><span class="grip"></span><label>命令:<input aria-label="命令"></label></div>
  </div>
</main>

<footer class="status">
  <button class="flat scale">比例<span class="m"> 1:100</span><svg class="arr" viewBox="0 0 8 5"><path d="M0 0H8L4 5Z"/></svg></button>
  <output class="m">460.6099, 1582.9633, 0.0000</output>
  <div class="modes"><button>捕捉</button><button>栅格</button><button>正交</button><button>极轴</button><button class="on">对象捕捉</button><button>对象追踪</button><button class="on m">DUCS</button><button class="m">DYN</button><button>线宽</button><button class="on">模型</button></div>
  <button class="flat anno">注释比例:<span class="m"> 1:1</span><svg class="arr" viewBox="0 0 8 5"><path d="M0 0H8L4 5Z"/></svg></button>
  <div class="ime">
    <svg class="sogou" viewBox="0 0 18 18"><path fill="#e8481c" d="M1 3L16 1L17 15L3 17Z"/><path stroke="#fff" stroke-width="2" fill="none" d="M13 5H6V9H12V13H5"/></svg>
    <span>中</span>
    <svg viewBox="0 0 16 16"><path d="M9 1Q13 10 2 12Q12 17 14 8Q14 3 9 1Z"/></svg>
    <svg viewBox="0 0 16 16"><circle fill="none" stroke="#4a8fd0" cx="4" cy="5" r="2"/><path d="M9 9H12V12L9 15Z"/></svg>
    <svg viewBox="0 0 16 16"><path d="M0 2H16V14H0Z"/><path stroke="#fff" stroke-dasharray="2 1" d="M2 5H14M2 8H14"/><path stroke="#fff" d="M4 11H12"/></svg>
    <svg viewBox="0 0 16 16" class="gray"><circle cx="8" cy="5" r="3.500"/><path d="M3 14Q3 8 8 8Q13 8 13 14Z"/></svg>
    <svg viewBox="0 0 16 16"><path d="M5 2Q8 4 11 2L16 5L14 9L12 8V15H4V8L2 9L0 5Z"/></svg>
    <svg viewBox="0 0 16 16"><path d="M1 13L8 6Q7 1 13 1L10 4L12 6L15 4Q15 10 10 9L3 15Z"/></svg>
  </div>
</footer>
</body>
</html>
```

FILE: styles.css
```css
* { box-sizing: border-box; }
body {
  margin: 0;
  padding-top: 20px;
  background: #fff;
  color: #111;
  font: 12px/18px "Noto Sans", "Noto Sans CJK SC", sans-serif;
  overflow-x: hidden;
}
button, input, select {
  margin: 0;
  padding: 0;
  border: 0;
  background: none;
  color: inherit;
  font: inherit;
  white-space: nowrap;
}
svg { flex: none; display: block; }
.defs { position: absolute; width: 0; height: 0; }

/* icon palette */
.t svg, .combo svg, .p svg, .defs symbol { fill: none; stroke: #2a4d7c; stroke-width: 1; }
.lb { fill: #cfe0f2; }
.mb { fill: #3f78b4; }
.db { fill: #2c5f9e; }
.wh { fill: #fff; }
.gn { fill: #0c2; }
.yl { fill: #f4d548; }
.or { fill: #f0a848; }
.rd { fill: #f00; }
.bk { fill: #111; }
.n { stroke: none; }
.sk { stroke: #111; }
.sd { stroke: #334; }
.sr { stroke: #e01818; }
.sb { stroke: #11c; }
.sg { stroke: #0b3; }
.sgn { stroke: #087a1c; }
.sgn2 { stroke: #087a1c; stroke-width: 2; }
.sgy { stroke: #999; }
.sbr { stroke: #76531c; }
.sol { stroke: #99991c; }
.sp { stroke: #718; }
.w2 { stroke-width: 2; }
.tr { fill: #2f62a0; stroke: none; }

/* title */
.titlebar {
  position: relative;
  display: flex;
  align-items: center;
  height: 21px;
  background: linear-gradient(90deg, #f4f4f4, #d9d9d9 45%, #cfcfcf 65%, #e2e2e2 85%, #eee);
}
.appicon { width: 16px; height: 16px; }
.titlebar h1 { margin: 0 0 0 5px; font-size: 12px; font-weight: 400; white-space: nowrap; }
.accent { position: absolute; top: 0; left: 473px; width: 216px; height: 2px; background: #3a64a8; }
.winbtns { display: flex; align-self: flex-start; margin: 0 3px 0 auto; border: 1px solid #777; border-top: 0; border-radius: 0 0 5px 5px; overflow: hidden; }
.winbtns button { display: flex; align-items: center; justify-content: center; width: 28px; height: 18px; background: linear-gradient(#f1f1f1, #ccc); border-right: 1px solid #888; }
.winbtns .wmax { width: 27px; }
.winbtns .wclose { width: 47px; border: 0; background: linear-gradient(#e29a86, #c9412b 50%, #d9684a); }
.winbtns svg { width: 15px; height: 15px; fill: #fff; stroke: #555; }

/* menu */
.menubar { display: flex; align-items: center; gap: 15px; height: 22px; padding: 0 1px 0 7px; background: linear-gradient(#fff, #eef1fa 45%, #d5dcee 55%, #e3e8f5); }
.docicon { width: 16px; height: 16px; margin-right: -8px; }
.mdi { display: flex; gap: 2px; margin-left: auto; }
.mdi button { width: 17px; height: 18px; border: 1px solid #9ab4cc; background: #eef3fa; }
.mdi svg { width: 15px; height: 16px; fill: none; stroke: #5b6f86; }

/* toolbars */
.bars { background: #f0f0f0; border-bottom: 2px solid #999; }
.bar { display: flex; height: 27px; border-bottom: 1px solid #a8a8a8; }
.bar + .bar { border-bottom: 0; }
.group { display: flex; align-items: center; padding-right: 3px; border-right: 1px solid #999; border-top: 1px solid #fff; }
.group.last { flex: 1; min-width: 0; padding-right: 0; border-right: 0; overflow: hidden; }
.grip { flex: none; width: 6px; height: 22px; margin: 0 4px 0 3px; border: 1px solid #aaa; border-width: 0 1px; background: linear-gradient(90deg, #fff 1px, #f0f0f0 1px, #f0f0f0 2px, #aaa 2px, #aaa 3px, #fff 3px); }
.t { display: flex; flex: none; align-items: center; justify-content: center; width: 23px; height: 22px; }
.t svg { width: 16px; height: 16px; }
.sep { flex: none; width: 6px; height: 18px; background: linear-gradient(90deg, transparent 2px, #888 2px, #888 3px, transparent 3px); }
.drop { display: flex; flex: none; width: 12px; justify-content: center; }
.drop svg { width: 6px; height: 4px; fill: #226; }
.drop.dim svg { fill: #aaa; }
.search { flex: 1; min-width: 0; height: 20px; margin-left: 2px; background: #fff; }
.combo { display: flex; align-items: center; height: 22px; background: #fff; padding-right: 4px; }
.combo svg { width: 16px; height: 16px; margin-right: 1px; }
.combo .arr, .arr { width: 8px; height: 5px; margin: 0; fill: #000; stroke: none; }
.layer { width: 298px; padding-left: 2px; margin-right: 1px; }
.swatch { width: 10px; height: 10px; border: 1px solid #000; background: #0ff; flex: none; margin-left: 1px; }
.sel { flex: 1; min-width: 0; appearance: none; outline: 0; }
.layer .sel { padding-left: 5px; }
.space { flex: 1; min-width: 0; padding-left: 11px; margin-right: 1px; }

/* workspace */
.work { display: flex; background: #f0f0f0; border-bottom: 1px solid #888; }
.panel { flex: none; width: 109px; border-right: 2px solid #888; padding-top: 1px; }
.phead { display: flex; align-items: center; gap: 4px; height: 15px; margin: 0 13px 0 7px; }
.phead button { width: 10px; height: 10px; border: 1px solid #333; border-radius: 2px; }
.phead svg { width: 8px; height: 8px; stroke: #000; }
.phead span { flex: 1; height: 7px; border: 1px solid #aaa; border-width: 1px 0; background: linear-gradient(#fff 2px, #aaa 2px, #aaa 3px, #fff 3px); }
.p { display: flex; align-items: center; height: 18px; padding-left: 3px; }
.p svg { width: 16px; height: 16px; margin-right: 5px; }
.p .a { width: 7px; height: 9px; margin: 0 9px 0 5px; }
.p .down { width: 9px; height: 5px; margin: 0 8px 0 4px; }
.pl { width: 16px; margin-right: 5px; border-bottom: 1px solid #e33; color: #0b9a1c; font: 700 12px/14px "Liberation Serif", serif; }
hr { height: 1px; margin: 2px 7px 3px 3px; border: 0; background: #999; }
hr.tight { margin: 1px 7px 2px 3px; }
hr.wide { margin-left: 0; background: #777; }
.cut { height: 14px; overflow: hidden; }
.right { flex: 1; min-width: 0; display: flex; flex-direction: column; }
.upper { flex: 1; display: flex; min-height: 0; }
.drawcol { flex: none; width: 27px; border-right: 1px solid #999; }
.drawbar { display: flex; flex-direction: column; align-items: center; padding: 2px 1px 4px 0; border: 1px solid #aaa; border-width: 0 0 1px; }
.hgrip { width: 19px; height: 6px; margin-bottom: 3px; border: 1px solid #aaa; border-width: 1px 0; background: linear-gradient(#fff 2px, #aaa 2px, #aaa 3px, #fff 3px); }
.doc { flex: 1; min-width: 0; display: flex; flex-direction: column; padding: 0 1px 2px 0; }
.tabs { display: flex; height: 19px; background: #f1eded; border-bottom: 1px solid #fff; }
.tabs button { padding: 0 8px; border-right: 1px solid #555; height: 18px; }
.tabs .on { margin-left: 3px; border-left: 1px solid #555; border-right: 0; background: #fdeaea; color: #11d; }
.mono, .m { font-family: "Liberation Mono", "Noto Sans CJK SC", monospace; font-size: 10px; white-space: pre; }

/* drawing */
.canvas { position: relative; flex: 1; border: 2px solid #777; border-width: 2px 0 0 2px; background: #000; overflow: hidden; }
.canvas table { width: 100%; table-layout: fixed; border-collapse: collapse; color: #ff0; font: 14px/20px "Noto Sans CJK SC", sans-serif; }
.cn { width: 150px; }
.cl { width: 117px; }
.cd { width: 252px; }
.canvas tr { height: 31px; }
.canvas tr.top { height: 26px; }
.canvas tr.tall { height: 62px; }
.canvas td, .canvas th { padding: 0; border: 1px solid #00e000; border-top: 0; font-weight: 400; text-align: center; white-space: nowrap; overflow: hidden; }
.canvas td:last-child { border-right: 0; text-align: right; }
.canvas th:first-child { border: 0; padding-left: 122px; color: #fff; text-align: left; font-size: 14px; }
.canvas .tall th:first-child { padding-top: 30px; }
.canvas th { padding-left: 11px; color: #0f0; text-align: left; font-size: 11px; }
.canvas th.w { padding-left: 7px; }
.canvas b { font-weight: 400; font-size: 14px; }
.canvas .z { font-size: 11px; }
.pe { position: absolute; top: 0; left: 706px; display: flex; gap: 10px; color: #00e000; font: 14px/20px "Noto Sans CJK SC", sans-serif; }
.pe svg { width: 12px; height: 14px; stroke: #0f0; fill: none; }
.tap { position: absolute; top: -2px; left: 858px; width: 26px; height: 28px; stroke: #0f0; fill: none; }
.ucs { position: absolute; left: 8px; bottom: 8px; width: 90px; height: 92px; stroke: #fff; fill: none; }
.cursor { position: absolute; left: 296px; top: 178px; width: 18px; height: 16px; fill: #fff; stroke: #fff; }
.modeltabs { display: flex; align-items: center; height: 16px; background: #f1eded; line-height: 16px; }
.nb { width: 14px; height: 14px; border-right: 1px solid #aaa; }
.nb svg { width: 12px; height: 10px; fill: #666; }
.mt { padding: 0 3px 0 6px; height: 16px; }
.mt.on { margin-left: 3px; padding: 0 9px; background: #000; color: #fff; clip-path: polygon(0 0, 100% 0, 88% 100%, 12% 100%); }
.slash { width: 8px; height: 14px; stroke: #555; }
.elec { display: flex; align-items: center; height: 28px; margin-left: 27px; border: 1px solid #fff; border-bottom-color: #999; border-left: 0; overflow: hidden; }
.cj { position: relative; color: #11d; }
.cj .bolt { position: absolute; left: 5px; top: 4px; }
.cmd { display: flex; align-items: center; height: 36px; margin-top: 4px; padding: 8px 24px 1px 4px; border-top: 2px solid #777; }
.cmd label { flex: 1; display: flex; align-items: center; height: 22px; border: 1px solid #666; border-width: 2px 0 0 2px; background: #fff; font: 15px/18px "Noto Sans CJK SC", sans-serif; }
.cmd input { flex: 1; min-width: 0; outline: 0; }

/* status bar */
.status { display: flex; align-items: center; height: 22px; background: #f1eded; border-top: 1px solid #ccc; }
.flat { display: flex; align-items: center; }
.flat .arr { margin-left: 4px; }
.scale { width: 87px; padding-left: 7px; }
.status output { width: 210px; height: 18px; border: 1px solid #aaa; padding-left: 1px; line-height: 16px; }
.modes { display: flex; gap: 4px; margin-left: 4px; }
.modes button { height: 18px; padding: 0 2px 0 1px; border: 1px solid #999; border-color: #fff #999 #999 #fff; line-height: 16px; }
.modes .on { border-color: #000 #fff #fff #000; }
.anno { margin-left: auto; margin-right: 6px; }
.ime { display: flex; align-items: center; justify-content: space-between; width: 168px; height: 21px; padding: 0 7px 0 2px; border: 1px solid #8ab; background: #f5fbff; color: #3d84c8; font-size: 15px; font-weight: 700; }
.ime svg { width: 16px; height: 16px; fill: #4a8fd0; }
.ime .sogou { width: 18px; height: 18px; }
.ime .gray { fill: #aaa; }
```
